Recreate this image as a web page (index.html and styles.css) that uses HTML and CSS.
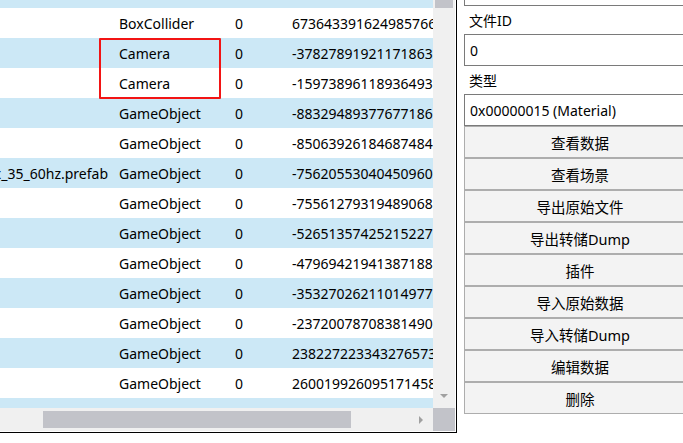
FILE: index.html
```html
<!DOCTYPE html>
<html>
<head>
<meta charset="utf-8">
<link rel="stylesheet" href="styles.css">
</head>
<body>
<div class="app">
  <div class="frame">
    <div class="list">
      <div class="rows">
        <div class="row alt"></div>
        <div class="row"><div class="c-name"></div><div class="c-type">BoxCollider</div><div class="c-flag">0</div><div class="c-id">6736433916249857660</div></div>
        <div class="row alt"><div class="c-name"></div><div class="c-type">Camera</div><div class="c-flag">0</div><div class="c-id">-3782789192117186351</div></div>
        <div class="row"><div class="c-name"></div><div class="c-type">Camera</div><div class="c-flag">0</div><div class="c-id">-1597389611893649372</div></div>
        <div class="row alt"><div class="c-name"></div><div class="c-type">GameObject</div><div class="c-flag">0</div><div class="c-id">-8832948937767718612</div></div>
        <div class="row"><div class="c-name"></div><div class="c-type">GameObject</div><div class="c-flag">0</div><div class="c-id">-8506392618468748421</div></div>
        <div class="row alt"><div class="c-name"><span>Main_Camera_x_35_60hz.prefab</span></div><div class="c-type">GameObject</div><div class="c-flag">0</div><div class="c-id">-7562055304045096013</div></div>
        <div class="row"><div class="c-name"></div><div class="c-type">GameObject</div><div class="c-flag">0</div><div class="c-id">-7556127931948906854</div></div>
        <div class="row alt"><div class="c-name"></div><div class="c-type">GameObject</div><div class="c-flag">0</div><div class="c-id">-5265135742521522719</div></div>
        <div class="row"><div class="c-name"></div><div class="c-type">GameObject</div><div class="c-flag">0</div><div class="c-id">-4796942194138718834</div></div>
        <div class="row alt"><div class="c-name"></div><div class="c-type">GameObject</div><div class="c-flag">0</div><div class="c-id">-3532702621101497762</div></div>
        <div class="row"><div class="c-name"></div><div class="c-type">GameObject</div><div class="c-flag">0</div><div class="c-id">-2372007870838149025</div></div>
        <div class="row alt"><div class="c-name"></div><div class="c-type">GameObject</div><div class="c-flag">0</div><div class="c-id">2382272233432765731</div></div>
        <div class="row"><div class="c-name"></div><div class="c-type">GameObject</div><div class="c-flag">0</div><div class="c-id">2600199260951714583</div></div>
        <div class="row alt"></div>
      </div>
      <div class="highlight"></div>
    </div>
    <div class="vscroll">
      <div class="vthumb"></div>
      <div class="vtrack"></div>
      <div class="arrow-down"></div>
    </div>
    <div class="hscroll">
      <div class="hthumb"></div>
      <div class="htrack"></div>
      <div class="arrow-right"></div>
    </div>
    <div class="corner"></div>
  </div>
  <div class="side">
    <div class="field"></div>
    <div class="label">文件ID</div>
    <div class="field">0</div>
    <div class="label">类型</div>
    <div class="field">0x00000015 (Material)</div>
    <div class="btn">查看数据</div>
    <div class="btn">查看场景</div>
    <div class="btn">导出原始文件</div>
    <div class="btn">导出转储Dump</div>
    <div class="btn">插件</div>
    <div class="btn">导入原始数据</div>
    <div class="btn">导入转储Dump</div>
    <div class="btn">编辑数据</div>
    <div class="btn">删除</div>
  </div>
</div>
</body>
</html>
```
FILE: styles.css
```css
html, body {
  margin: 0;
  padding: 0;
  background: #fff;
}
body {
  width: 683px;
  height: 443px;
  overflow: hidden;
  font-family: "Noto Sans", "Noto Sans CJK SC", sans-serif;
  font-size: 14px;
  color: #000;
}
.app {
  display: flex;
  align-items: flex-start;
}
.frame {
  flex: none;
  width: 455px;
  height: 431px;
  padding: 0 1px 1px 0;
  border-right: 1px solid #000;
  border-bottom: 1px solid #000;
  display: grid;
  grid-template-columns: 433px 22px;
  grid-template-rows: 408px 23px;
  background: #fff;
}
.list {
  position: relative;
  overflow: hidden;
}
.rows {
  margin-top: -22px;
}
.row {
  display: flex;
  align-items: center;
  height: 30px;
  white-space: nowrap;
  background: #fff;
}
.row.alt {
  background: #cce8f6;
}
.c-name {
  flex: none;
  width: 108px;
  margin-right: 11px;
  overflow: hidden;
  display: flex;
  justify-content: flex-end;
}
.c-type {
  flex: none;
  width: 116px;
}
.c-flag {
  flex: none;
  width: 57px;
}
.c-id {
  flex: none;
}
.highlight {
  position: absolute;
  left: 99px;
  top: 38px;
  width: 122px;
  height: 61px;
  box-sizing: border-box;
  border: 2px solid #f21414;
  border-radius: 1px;
}
.vscroll {
  background: #f0f0f0;
  display: flex;
  flex-direction: column;
  align-items: center;
}
.vthumb {
  width: 18px;
  height: 8px;
  background: #c2c3c9;
}
.vtrack {
  flex: 1;
}
.arrow-down {
  width: 0;
  height: 0;
  border-left: 4px solid transparent;
  border-right: 4px solid transparent;
  border-top: 4px solid #a0a0a0;
  margin-bottom: 10px;
}
.hscroll {
  background: #f0f0f0;
  display: flex;
  align-items: center;
  padding-left: 43px;
  padding-right: 10px;
}
.hthumb {
  width: 308px;
  height: 17px;
  background: #c2c3c9;
}
.htrack {
  flex: 1;
}
.arrow-right {
  width: 0;
  height: 0;
  border-top: 4px solid transparent;
  border-bottom: 4px solid transparent;
  border-left: 4px solid #a0a0a0;
}
.corner {
  background: #c2c3c9;
}
.side {
  flex: none;
  width: 219px;
  padding-left: 7px;
  overflow: hidden;
  display: flex;
  flex-direction: column;
  margin-top: -26px;
  height: 440px;
}
.field {
  flex: none;
  width: 232px;
  height: 32px;
  box-sizing: border-box;
  border: 1px solid #7a7a7a;
  padding-left: 5px;
  display: flex;
  align-items: center;
  white-space: nowrap;
  background: #fff;
}
.label {
  flex: none;
  height: 28px;
  padding-left: 5px;
  display: flex;
  align-items: center;
}
.btn {
  flex: none;
  width: 232px;
  height: 32px;
  box-sizing: border-box;
  border: 1px solid #adadad;
  background: #f3f3f3;
  display: flex;
  align-items: center;
  justify-content: center;
  white-space: nowrap;
  font-size: 14.5px;
}
```
